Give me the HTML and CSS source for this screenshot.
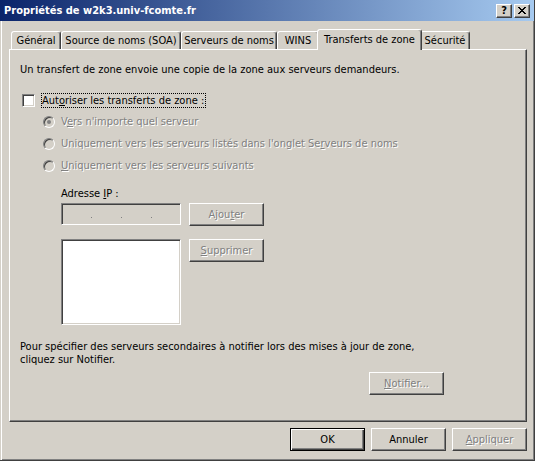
FILE: index.html
```html
<!DOCTYPE html>
<html lang="fr">
<head>
<meta charset="utf-8">
<title>Propriétés de w2k3.univ-fcomte.fr</title>
<link rel="stylesheet" href="styles.css">
</head>
<body>
<div class="window">
  <div class="titlebar">
    <span class="title">Propriétés de w2k3.univ-fcomte.fr</span>
    <div class="caption-btns">
      <span class="cbtn cbtn-help">?</span>
      <span class="cbtn"><svg width="8" height="7" viewBox="0 0 8 7"><path d="M0 0h2v1h1v1h2v-1h1v-1h2v1h-1v1h-1v1h-1v1h1v1h1v1h1v1h-2v-1h-1v-1h-2v1h-1v1h-2v-1h1v-1h1v-1h1v-1h-1v-1h-1v-1h-1z" fill="#000"/></svg></span>
    </div>
  </div>
  <div class="content">
    <div class="tabs">
      <div class="tab tab-general">Général</div>
      <div class="tab tab-soa">Source de noms (SOA)</div>
      <div class="tab tab-ns">Serveurs de noms</div>
      <div class="tab tab-wins">WINS</div>
      <div class="tab tab-xfer active">Transferts de zone</div>
      <div class="tab tab-sec">Sécurité</div>
    </div>
    <div class="panel">
      <p class="desc">Un transfert de zone envoie une copie de la zone aux serveurs demandeurs.</p>
      <div class="check-row">
        <span class="checkbox"></span>
        <span class="focus">Aut<u>o</u>riser les transferts de zone :</span>
      </div>
      <div class="radios">
        <div class="radio-row disabled"><span class="radio checked"></span><span>V<u>e</u>rs n'importe quel serveur</span></div>
        <div class="radio-row disabled"><span class="radio"></span><span>Uniquement vers les serveurs listés dans l'onglet Se<u>r</u>veurs de noms</span></div>
        <div class="radio-row disabled"><span class="radio"></span><span><u>U</u>niquement vers les serveurs suivants</span></div>
      </div>
      <div class="ip-section">
        <div class="ip-label">Adresse <u>I</u>P :</div>
        <div class="ip-grid">
          <div class="ip-box"><span class="ip-dot"></span><span class="ip-dot"></span><span class="ip-dot"></span></div>
          <button class="btn disabled">Ajou<u>t</u>er</button>
          <div class="listbox"></div>
          <button class="btn disabled"><u>S</u>upprimer</button>
        </div>
      </div>
      <p class="notify-text">Pour spécifier des serveurs secondaires à notifier lors des mises à jour de zone,<br>cliquez sur Notifier.</p>
      <div class="notify-row"><button class="btn disabled"><u>N</u>otifier...</button></div>
    </div>
    <div class="footer">
      <button class="btn default">OK</button>
      <button class="btn">Annuler</button>
      <button class="btn disabled"><u>A</u>ppliquer</button>
    </div>
  </div>
</div>
</body>
</html>
```
FILE: styles.css
```css
* { box-sizing: border-box; }
html, body { margin: 0; padding: 0; }
body {
  background: #D4D0C8;
  font-family: "DejaVu Sans Condensed", "DejaVu Sans", sans-serif;
  font-stretch: condensed;
  font-size: 11px;
  line-height: 13px;
  color: #000;
}
u { text-decoration: underline; text-underline-offset: 1px; }

.window {
  width: 535px;
  height: 461px;
  display: flex;
  flex-direction: column;
  background: #D4D0C8;
  border-right: 1px solid #404040;
  border-bottom: 1px solid #404040;
  box-shadow: inset 1px 0 0 #D4D0C8, inset 2px 0 0 #fff, inset -1px -1px 0 #808080;
}

.titlebar {
  height: 21px;
  flex: none;
  display: flex;
  align-items: center;
  justify-content: space-between;
  padding: 0 4px 0 4px;
  background: linear-gradient(to right, #0A246A, #A6CAF0);
  color: #fff;
  font-weight: bold;
}
.caption-btns { display: flex; gap: 2px; }
.cbtn {
  width: 16px;
  height: 14px;
  display: flex;
  align-items: center;
  justify-content: center;
  background: #D4D0C8;
  border: 1px solid;
  border-color: #fff #404040 #404040 #fff;
  box-shadow: inset -1px -1px 0 #808080;
  color: #000;
  font-family: "DejaVu Sans", sans-serif;
  font-size: 11px;
  font-weight: bold;
  line-height: 12px;
}
.cbtn svg { display: block; }

.content {
  flex: 1;
  display: flex;
  flex-direction: column;
  padding: 8px 7px 0 9px;
}

.tabs {
  display: flex;
  align-items: flex-end;
  height: 20px;
  padding-left: 2px;
}
.tab {
  height: 18px;
  display: flex;
  align-items: center;
  justify-content: center;
  border: 1px solid;
  border-bottom: 0;
  border-color: #fff #404040 transparent #fff;
  border-radius: 3px 3px 0 0;
  box-shadow: inset -1px 0 0 #808080;
  white-space: nowrap;
  background: #D4D0C8;
}
.tab-general { width: 50px; }
.tab-soa { width: 120px; }
.tab-ns { width: 96px; }
.tab-wins { width: 42px; }
.tab-xfer { width: 101px; }
.tab-sec { width: 50px; }
.tab.active {
  width: 105px;
  height: 21px;
  margin: 0 -2px -1px;
  padding-bottom: 2px;
  position: relative;
  z-index: 1;
}

.panel {
  height: 373px;
  border: 1px solid;
  border-color: #fff #404040 #404040 #fff;
  box-shadow: inset -1px -1px 0 #808080;
  padding: 13px 10px 0 10px;
}
.desc { margin: 0; }

.check-row {
  margin-top: 17px;
  display: flex;
  align-items: center;
  height: 15px;
}
.checkbox {
  width: 13px;
  height: 13px;
  margin-left: 2px;
  margin-right: 6px;
  background: #fff;
  border: 1px solid;
  border-color: #808080 #fff #fff #808080;
  box-shadow: inset 1px 1px 0 #404040, inset -1px -1px 0 #D4D0C8;
}
.focus {
  border: 1px dotted #000;
  padding: 0 1px 0 0;
  line-height: 13px;
}

.radios {
  margin-top: 7px;
  margin-left: 23px;
  display: flex;
  flex-direction: column;
  gap: 9px;
}
.radio-row {
  display: flex;
  align-items: center;
  height: 13px;
  gap: 6px;
}
.radio {
  width: 12px;
  height: 12px;
  border-radius: 50%;
  border: 1px solid;
  border-color: #808080 #fff #fff #808080;
  box-shadow: inset 1px 1px 0 #404040, inset -1px -1px 0 #D4D0C8;
  background: #D4D0C8;
  display: flex;
  align-items: center;
  justify-content: center;
  transform: rotate(0deg);
}
.radio.checked::after {
  content: "";
  width: 4px;
  height: 4px;
  border-radius: 50%;
  background: #808080;
}

.disabled { color: #808080; text-shadow: 1px 1px 0 #fff; }

.ip-section { margin-top: 15px; margin-left: 41px; }
.ip-label { height: 13px; }
.ip-grid {
  margin-top: 3px;
  display: grid;
  grid-template-columns: 120px 75px;
  grid-template-rows: 23px 86px;
  column-gap: 8px;
  row-gap: 13px;
  align-items: start;
}
.ip-box {
  height: 22px;
  display: flex;
  gap: 29px;
  padding: 13px 0 0 29px;
  background: #D4D0C8;
  border: 1px solid;
  border-color: #808080 #fff #fff #808080;
  box-shadow: inset 1px 1px 0 #404040, inset -1px -1px 0 #D4D0C8;
}
.ip-dot { width: 1px; height: 1px; background: #808080; }
.listbox {
  height: 86px;
  background: #fff;
  border: 1px solid;
  border-color: #808080 #fff #fff #808080;
  box-shadow: inset 1px 1px 0 #404040, inset -1px -1px 0 #D4D0C8;
}

.notify-text { margin: 15px 0 0 0; }
.notify-row { margin-top: 6px; padding-left: 349px; }

.btn {
  width: 75px;
  height: 23px;
  padding: 0;
  margin: 0;
  display: flex;
  align-items: center;
  justify-content: center;
  font: inherit;
  background: #D4D0C8;
  border: 1px solid;
  border-color: #fff #404040 #404040 #fff;
  border-radius: 0;
  box-shadow: inset -1px -1px 0 #808080;
  color: #000;
}
.btn.disabled { color: #808080; text-shadow: 1px 1px 0 #fff; }
.btn.default {
  border-color: #000;
  box-shadow: inset 1px 1px 0 #fff, inset -1px -1px 0 #404040, inset -2px -2px 0 #808080;
}

.footer {
  margin-top: 6px;
  display: flex;
  justify-content: flex-end;
  gap: 6px;
}
```
